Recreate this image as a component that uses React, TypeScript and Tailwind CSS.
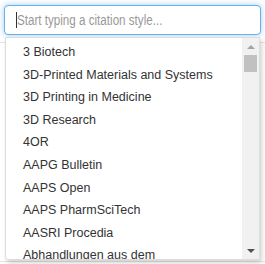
const styles = [
  '3 Biotech',
  '3D-Printed Materials and Systems',
  '3D Printing in Medicine',
  '3D Research',
  '4OR',
  'AAPG Bulletin',
  'AAPS Open',
  'AAPS PharmSciTech',
  'AASRI Procedia',
  'Abhandlungen aus dem Mathematischen Seminar der Universität Hamburg',
];

function Scrollbar() {
  return (
    <div className="flex w-[17px] shrink-0 flex-col items-center bg-[#f1f1f1]">
      <div className="flex h-[17px] w-full items-center justify-center">
        <div className="h-0 w-0 border-x-[4px] border-b-[4px] border-x-transparent border-b-[#a3a3a3]" />
      </div>
      <div className="h-[17px] w-[13px] bg-[#c1c1c1]" />
      <div className="flex-1" />
      <div className="flex h-[17px] w-full items-center justify-center">
        <div className="h-0 w-0 border-x-[4px] border-t-[4px] border-x-transparent border-t-[#505050]" />
      </div>
    </div>
  );
}

export default function App() {
  return (
    <div className="relative h-[264px] w-[265px] overflow-hidden bg-white font-['Liberation_Sans',Arial,sans-serif]">
      <div className="px-[4px] pt-[5px]">
        <div className="flex h-[30px] w-[257px] items-center rounded-[4px] border border-[#66afe9] bg-white pl-[11px] shadow-[0_0_6px_rgba(102,175,233,0.6)]">
          <span className="h-[16px] w-px shrink-0 bg-[#333]" />
          <span className="origin-left scale-x-[0.75] whitespace-nowrap text-[15.5px] text-[#999]">
            Start typing a citation style...
          </span>
        </div>
      </div>
      <div className="mt-[7px] h-px w-full bg-[#e5e5e5]" />
      <div className="mt-[218px] h-px w-full bg-[#e5e5e5]" />

      <div className="absolute left-[5px] top-[37px] flex h-[223px] w-[255px] overflow-hidden rounded-b-[3px] border border-[#ddd] bg-white shadow-[2px_3px_5px_rgba(0,0,0,0.18)]">
        <ul className="flex-1 overflow-hidden pt-[3px]">
          {styles.map((s) => (
            <li
              key={s}
              className="min-h-[22.6px] py-[3px] pl-[17px] pr-[13px] text-[12.5px] leading-[16.6px] text-[#333]"
            >
              {s}
            </li>
          ))}
        </ul>
        <Scrollbar />
      </div>
    </div>
  );
}
